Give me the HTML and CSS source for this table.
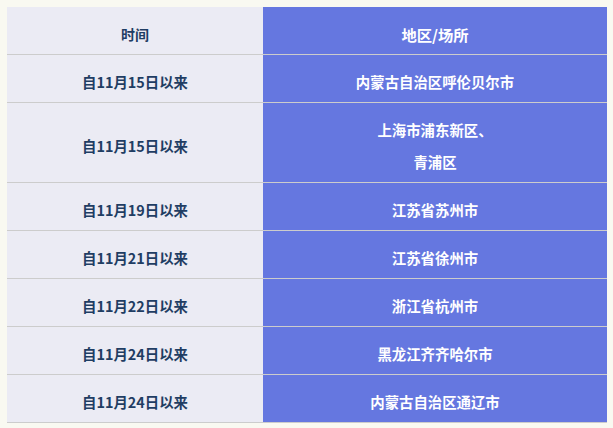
FILE: index.html
```html
<!DOCTYPE html>
<html lang="zh-CN">
<head>
<meta charset="utf-8">
<link rel="stylesheet" href="styles.css">
</head>
<body>
<table class="tbl">
  <thead>
    <tr>
      <th class="c-time">时间</th>
      <th class="c-place">地区/场所</th>
    </tr>
  </thead>
  <tbody>
    <tr><td class="c-time">自11月15日以来</td><td class="c-place">内蒙古自治区呼伦贝尔市</td></tr>
    <tr><td class="c-time">自11月15日以来</td><td class="c-place">上海市浦东新区、<br>青浦区</td></tr>
    <tr><td class="c-time">自11月19日以来</td><td class="c-place">江苏省苏州市</td></tr>
    <tr><td class="c-time">自11月21日以来</td><td class="c-place">江苏省徐州市</td></tr>
    <tr><td class="c-time">自11月22日以来</td><td class="c-place">浙江省杭州市</td></tr>
    <tr><td class="c-time">自11月24日以来</td><td class="c-place">黑龙江齐齐哈尔市</td></tr>
    <tr><td class="c-time">自11月24日以来</td><td class="c-place">内蒙古自治区通辽市</td></tr>
  </tbody>
</table>
</body>
</html>
```
FILE: styles.css
```css
html, body {
  margin: 0;
  padding: 0;
  background: #f9f9f1;
}
body {
  padding: 7px 6px 7px 7px;
  font-family: "Noto Sans CJK SC", "Noto Sans", sans-serif;
  font-weight: 700;
}
.tbl {
  width: 600px;
  border-collapse: collapse;
  table-layout: fixed;
}
.tbl th,
.tbl td {
  box-sizing: border-box;
  padding: 11px 8px 4px;
  line-height: 32px;
  text-align: center;
  border-bottom: 1px solid #cccccc;
  font-weight: 700;
}
.c-time {
  width: 256px;
  background: #ebebf4;
  color: #1f3d63;
  font-size: 14.4px;
}
.c-place {
  background: #6577e0;
  color: #ffffff;
  font-size: 14.4px;
}
th.c-time {
  font-size: 14px;
}
th.c-place {
  font-size: 15.3px;
}
```
